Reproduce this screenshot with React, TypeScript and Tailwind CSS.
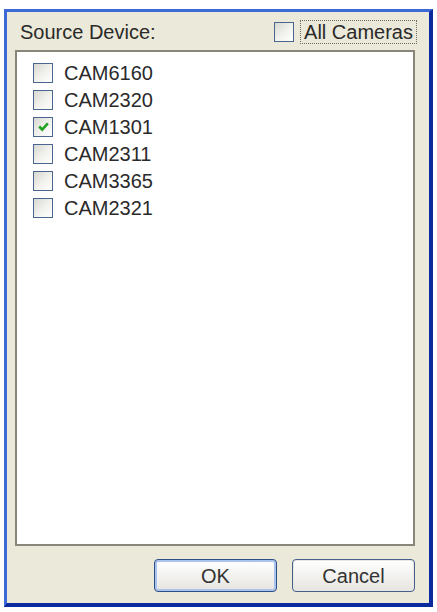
import { useState } from "react";

const cameras = ["CAM6160", "CAM2320", "CAM1301", "CAM2311", "CAM3365", "CAM2321"];

function Box({ checked, onClick }: { checked: boolean; onClick?: () => void }) {
  return (
    <span
      onClick={onClick}
      className="flex h-[20px] w-[20px] shrink-0 items-center justify-center border border-[#4a6690] bg-gradient-to-br from-[#d8d8d2] via-[#f0f0ec] to-white"
    >
      {checked && (
        <svg viewBox="0 0 12 12" className="h-[13px] w-[13px]">
          <path d="M2 6 L4.8 8.8 L10 3.2" fill="none" stroke="#21a121" strokeWidth="2.4" />
        </svg>
      )}
    </span>
  );
}

function Button({ label, primary }: { label: string; primary?: boolean }) {
  return (
    <button
      className={
        "flex h-[33px] w-[123px] items-center justify-center rounded-[4px] border bg-gradient-to-b from-white to-[#e6e5e0] text-[20px] text-[#333] " +
        (primary
          ? "border-[#2c4f86] shadow-[inset_0_0_0_2px_#a9c3ec]"
          : "border-[#47608a] shadow-[inset_0_0_0_1px_#e8e8e2]")
      }
    >
      {label}
    </button>
  );
}

export default function App() {
  const [checked, setChecked] = useState<Record<string, boolean>>({ CAM1301: true });
  const [all, setAll] = useState(false);

  return (
    <div className="h-[612px] w-[437px] bg-white pl-[4px] pt-[9px] font-['Liberation_Sans',Arial,sans-serif]">
      <div className="flex h-[598px] w-[429px] flex-col border-b-[4px] border-l-[3px] border-r-[4px] border-t-[3px] border-b-[#0b2a9e] border-l-[#3d6ad6] border-r-[#0b2a9e] border-t-[#3d6ad6] bg-[#ebe9d9]">
        <div className="flex h-[38px] shrink-0 items-center justify-between pl-[13px] pr-[12px] pt-[2px]">
          <span className="text-[20px] text-[#2a2a2a]">Source Device:</span>
          <div className="flex items-center gap-[6px]">
            <Box checked={all} onClick={() => setAll(!all)} />
            <span className="border border-dotted border-[#6e6e66] px-[3px] text-[20px] leading-[22px] text-[#2a2a2a]">
              All Cameras
            </span>
          </div>
        </div>

        <div className="ml-[8px] h-[496px] w-[400px] shrink-0 border-2 border-[#8a857b] bg-white pl-[16px] pt-[7px]">
          <ul className="flex flex-col">
            {cameras.map((c) => (
              <li key={c} className="flex h-[27px] items-center gap-[11px]">
                <Box
                  checked={!!checked[c]}
                  onClick={() => setChecked({ ...checked, [c]: !checked[c] })}
                />
                <span className="text-[20px] text-[#2a2a2a]">{c}</span>
              </li>
            ))}
          </ul>
        </div>

        <div className="ml-[147px] mt-[13px] flex gap-[15px]">
          <Button label="OK" primary />
          <Button label="Cancel" />
        </div>
      </div>
    </div>
  );
}
